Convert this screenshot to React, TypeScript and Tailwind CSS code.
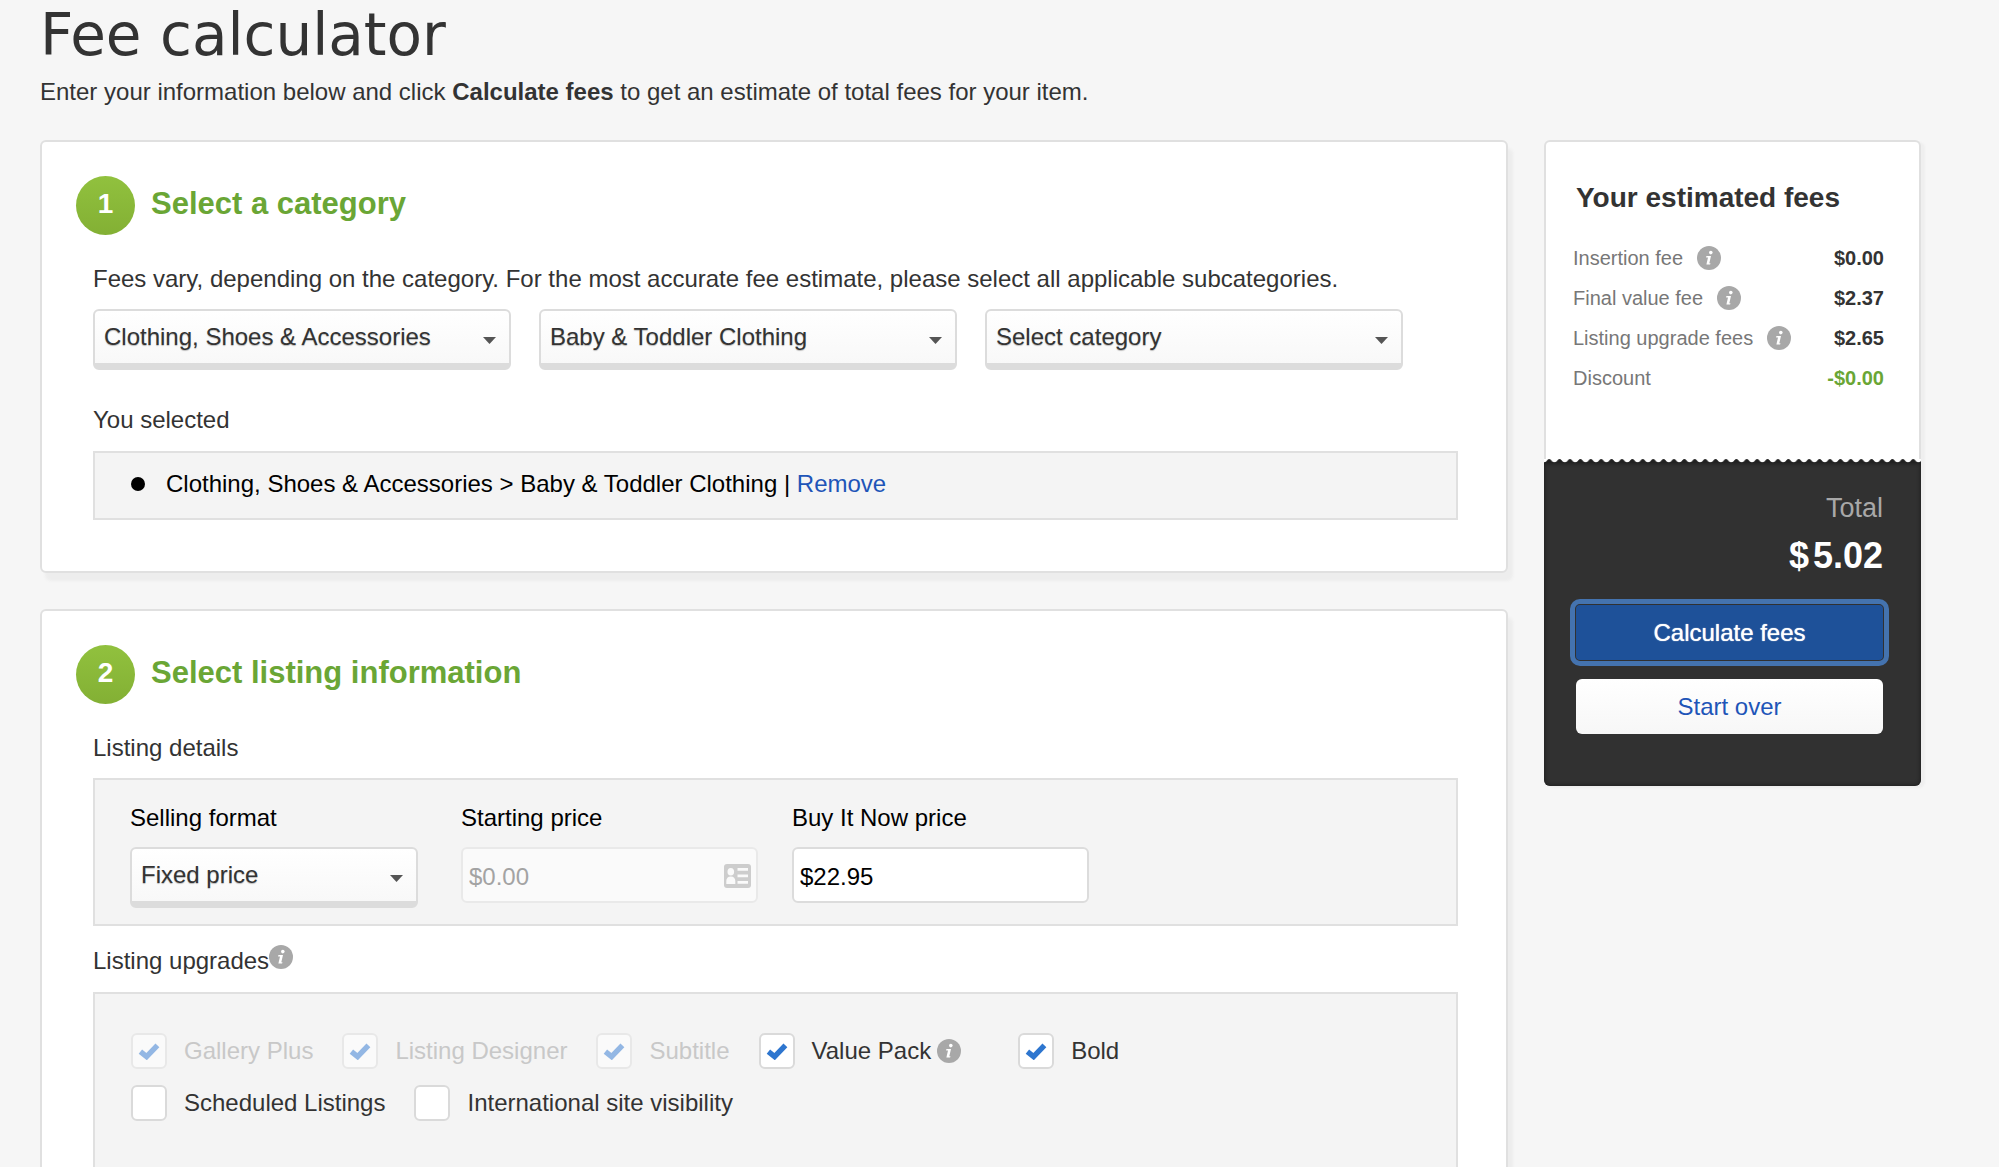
import type { ReactNode } from "react";
import clsx from "clsx";

const fees = [
  { label: "Insertion fee", value: "$0.00", info: true },
  { label: "Final value fee", value: "$2.37", info: true },
  { label: "Listing upgrade fees", value: "$2.65", info: true },
  { label: "Discount", value: "-$0.00", green: true },
];

function InfoIcon() {
  return (
    <svg viewBox="0 0 24 24" className="size-6 shrink-0" aria-hidden="true">
      <circle cx="12" cy="12" r="12" fill="#a8a8a8" />
      <circle cx="13.8" cy="6.6" r="1.8" fill="#fff" />
      <path d="M9.4 10h4.6l-1.7 7.2h1.2l-.4 1.400H9.400l1.600-7.200H9.100z" fill="#fff" />
    </svg>
  );
}

function ContactIcon() {
  return (
    <svg viewBox="0 0 27 24" className="absolute top-[17px] right-[7px] w-[27px] h-6" aria-hidden="true">
      <rect width="27" height="24" rx="3" fill="#cdcdcd" />
      <g fill="#fafafa">
        <ellipse cx="6.8" cy="7.800" rx="3.300" ry="3.800" />
        <path d="M2.300 20v-3c0-2.800 1.600-4.600 4.500-4.600s4.500 1.800 4.500 4.600v3z" />
        <path d="M13.500 4H24v2.800H13.500zM13.500 10.600H24v2.600H13.500zM13.500 17H24v2.700H13.500z" />
      </g>
    </svg>
  );
}

function Select({ id, label, value }: { id: string; label?: string; value: string }) {
  return (
    <div className="relative w-full">
      <select
        id={id}
        aria-label={label}
        className="block w-full h-[61px] appearance-none rounded-md border-2 border-b-[7px] border-[#dcdcdc] bg-linear-to-b from-white to-[#f8f8f8] pl-[9px] pr-12 text-2xl text-[#333] text-shadow-[0_1px_1px_rgb(0_0_0/0.25)]"
      >
        <option>{value}</option>
      </select>
      <svg viewBox="0 0 13 7" className="pointer-events-none absolute top-7 right-[15px] w-[13px] h-[7px]" aria-hidden="true">
        <path d="M0 0h13L6.500 7z" fill="#555" />
      </svg>
    </div>
  );
}

function Check({ label, checked, disabled, children }: { label: string; checked?: boolean; disabled?: boolean; children?: ReactNode }) {
  return (
    <div className="flex items-center">
      <label className={clsx("flex items-center gap-[17px] text-2xl leading-9", disabled ? "text-[#c8c8c8]" : "text-[#333]")}>
        <span className="relative">
          <input
            type="checkbox"
            defaultChecked={checked}
            disabled={disabled}
            className={clsx(
              "peer block size-9 appearance-none rounded-md border-2",
              disabled ? "border-[#e8e8e8] bg-[#fafafa]" : "border-[#dadada] bg-white"
            )}
          />
          <svg
            viewBox="0 0 22 17"
            className="pointer-events-none absolute top-2.5 left-[7px] hidden h-[17px] w-[22px] peer-checked:block peer-disabled:opacity-50"
            aria-hidden="true"
          >
            <path d="M2.400 8.600 8.600 13.600 19.400 2.400" fill="none" stroke="#2e76cf" strokeWidth="5.400" />
          </svg>
        </span>
        {label}
      </label>
      {children}
    </div>
  );
}

function Card({ step, title, children }: { step: number; title: string; children: ReactNode }) {
  return (
    <section className="rounded-md border-2 border-[#e0e0e0] bg-white px-[34px] pt-[34px] pb-[51px] shadow-[5px_8px_3px_#ededed]">
      <div className="flex items-center gap-4">
        <span className="flex size-[59px] items-center justify-center rounded-full bg-linear-to-b from-[#91c13e] to-[#83b034] pb-1 text-[28px] font-bold text-white">
          {step}
        </span>
        <h2 className="pb-1 text-[31px] font-bold leading-9 text-[#6aa635]">{title}</h2>
      </div>
      <div className="mt-7 pl-[17px] pr-3.5">{children}</div>
    </section>
  );
}

export default function App() {
  return (
    <main className="h-screen overflow-hidden bg-[#f6f6f6] pl-10 pr-[78px] font-['Liberation_Sans',Arial,sans-serif] text-[#333]">
      <h1 className="font-['DejaVu_Sans',Verdana,sans-serif] text-[58px] leading-[70px]">Fee calculator</h1>
      <p className="mt-1.5 text-2xl">
        Enter your information below and click <b>Calculate fees</b> to get an estimate of total fees for your item.
      </p>

      <div className="mt-8 flex items-start gap-9">
        <div className="flex min-w-0 flex-1 flex-col gap-9">
          <Card step={1} title="Select a category">
            <p className="text-2xl">
              Fees vary, depending on the category. For the most accurate fee estimate, please select all applicable subcategories.
            </p>
            <div className="mt-3.5 flex gap-7 pr-[55px]">
              <Select id="cat1" label="Category" value="Clothing, Shoes & Accessories" />
              <Select id="cat2" label="Subcategory" value="Baby & Toddler Clothing" />
              <Select id="cat3" label="Second subcategory" value="Select category" />
            </div>
            <h3 className="mt-[34px] text-2xl">You selected</h3>
            <ul className="mt-[15px] border-2 border-[#e0e0e0] bg-[#f4f4f4] px-9 pt-[15px] pb-[18px] text-2xl text-black">
              <li className="flex items-center">
                <span className="mr-[21px] size-3.5 rounded-full bg-black" />
                <span>
                  Clothing, Shoes &amp; Accessories &gt; Baby &amp; Toddler Clothing |{" "}
                  <a href="#remove" className="text-[#1e55b8]">Remove</a>
                </span>
              </li>
            </ul>
          </Card>

          <Card step={2} title="Select listing information">
            <h3 className="text-2xl">Listing details</h3>
            <div className="mt-3.5 flex border-2 border-[#e0e0e0] bg-[#f4f4f4] pl-[35px] pt-[22px] pb-4 text-2xl text-black">
              <div className="w-[331px] pr-[43px]">
                <label htmlFor="format" className="mb-[13px] block">Selling format</label>
                <Select id="format" value="Fixed price" />
              </div>
              <div className="w-[331px] pr-[34px]">
                <label htmlFor="start" className="mb-[13px] block">Starting price</label>
                <div className="relative">
                  <input
                    id="start"
                    disabled
                    defaultValue="$0.00"
                    className="h-14 w-full rounded-md border-2 border-[#e9e9e9] bg-[#fafafa] px-1.5 pt-1 text-[#a3a3a3]"
                  />
                  <ContactIcon />
                </div>
              </div>
              <div className="w-[331px] pr-[34px]">
                <label htmlFor="bin" className="mb-[13px] block">Buy It Now price</label>
                <input
                  id="bin"
                  defaultValue="$22.95"
                  className="h-14 w-full rounded-md border-2 border-[#dcdcdc] bg-white px-1.5 pt-1"
                />
              </div>
            </div>
            <h3 className="mt-[19px] flex text-2xl">
              Listing upgrades
              <InfoIcon />
            </h3>
            <div className="mt-[15px] flex flex-col gap-4 border-2 border-[#e0e0e0] bg-[#f4f4f4] pl-9 pt-[39px] pb-20">
              <div className="flex gap-[29px]">
                <Check label="Gallery Plus" checked disabled />
                <Check label="Listing Designer" checked disabled />
                <Check label="Subtitle" checked disabled />
                <Check label="Value Pack" checked>
                  <span className="ml-1.5 mr-7">
                    <InfoIcon />
                  </span>
                </Check>
                <Check label="Bold" checked />
              </div>
              <div className="flex gap-[29px]">
                <Check label="Scheduled Listings" />
                <Check label="International site visibility" />
              </div>
            </div>
          </Card>
        </div>

        <aside className="w-[377px] shrink-0 rounded-md shadow-[4px_2px_2px_#efefef]">
          <div className="rounded-t-md border-2 border-b-0 border-[#e0e0e0] bg-white px-[27px] pt-10 pb-[61px]">
            <h2 className="pl-[3px] text-[28px] font-bold leading-8">Your estimated fees</h2>
            <table className="mt-6 w-full text-xl leading-10">
              <tbody>
                {fees.map((fee) => (
                  <tr key={fee.label}>
                    <th scope="row" className="p-0 text-left font-normal text-[#777]">
                      <span className="flex items-center gap-3.5">
                        {fee.label}
                        {fee.info && <InfoIcon />}
                      </span>
                    </th>
                    <td className={clsx("p-0 pr-2 text-right font-bold", fee.green && "text-[#6aa635]")}>{fee.value}</td>
                  </tr>
                ))}
              </tbody>
            </table>
          </div>
          {/* torn receipt edge */}
          <svg className="block h-1 w-full bg-white" aria-hidden="true">
            <defs>
              <pattern id="torn" width="10.400" height="4" patternUnits="userSpaceOnUse">
                <path d="M0 4V3.200Q2.200 3 3.200 1.200Q5.200-1 7.200 1.200Q8.200 3 10.400 3.200V4z" fill="#222" />
              </pattern>
            </defs>
            <rect width="100%" height="4" fill="url(#torn)" />
          </svg>
          <div className="flex flex-col rounded-b-md bg-[#313131] pl-8 pr-[38px] pt-[29px] pb-[52px] shadow-[inset_0_0_4px_#1a1a1a]">
            <span className="text-right text-[27px] leading-8 text-[#a8a8a8]">Total</span>
            <span className="mt-2.5 flex justify-end gap-1 text-4xl font-bold leading-11 text-white">
              <span>$</span>
              <span>5.02</span>
            </span>
            <button
              type="button"
              className="mt-[27px] h-[55px] rounded-sm bg-[#1e5199] text-2xl text-white outline-5 outline-offset-1 outline-[#4473af] text-shadow-[0_0_1px_#fff]"
            >
              Calculate fees
            </button>
            <button
              type="button"
              className="mt-[19px] h-[55px] rounded-md bg-linear-to-b from-white to-[#f7f7f7] text-2xl text-[#1e55b8]"
            >
              Start over
            </button>
          </div>
        </aside>
      </div>
    </main>
  );
}
